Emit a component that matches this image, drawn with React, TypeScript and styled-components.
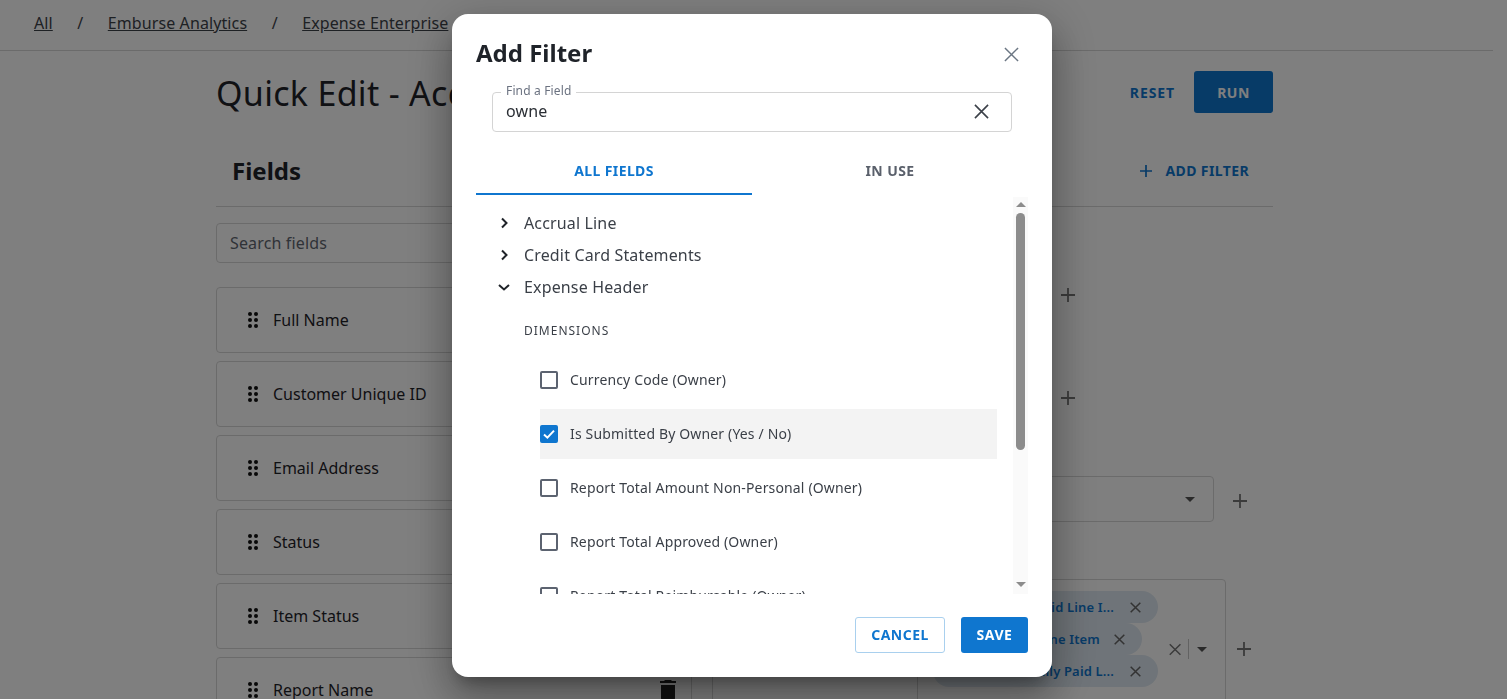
import React from 'react';
import styled, { createGlobalStyle } from 'styled-components';

const fieldNames = ['Full Name', 'Customer Unique ID', 'Email Address', 'Status', 'Item Status', 'Report Name'];
const checkItems = [
  { label: 'Currency Code (Owner)' },
  { label: 'Is Submitted By Owner (Yes / No)', checked: true },
  { label: 'Report Total Amount Non-Personal (Owner)' },
  { label: 'Report Total Approved (Owner)' },
  { label: 'Report Total Reimbursable (Owner)' },
];

const CloseIcon = ({ size = 16, color = '#3b4048', weight = 1.6 }: { size?: number; color?: string; weight?: number }) => (
  <svg width={size} height={size} viewBox="0 0 16 16" fill="none" stroke={color} strokeWidth={weight}>
    <path d="M1 1l14 14M15 1L1 15" />
  </svg>
);

const PlusIcon = ({ size = 14, color = '#777', weight = 1.8 }: { size?: number; color?: string; weight?: number }) => (
  <svg width={size} height={size} viewBox="0 0 14 14" fill="none" stroke={color} strokeWidth={weight}>
    <path d="M7 0v14M0 7h14" />
  </svg>
);

const DragIcon = () => (
  <svg width="10" height="16" viewBox="0 0 10 16" fill="#111">
    {[2, 8, 14].map((y) => (
      <React.Fragment key={y}>
        <circle cx="2" cy={y} r="2" />
        <circle cx="8" cy={y} r="2" />
      </React.Fragment>
    ))}
  </svg>
);

const TrashIcon = () => (
  <svg width="16" height="20" viewBox="0 0 16 20" fill="#222">
    <path d="M5 0h6l1 1h4v2H0V1h4zM1 5h14v13a2 2 0 0 1-2 2H3a2 2 0 0 1-2-2z" />
  </svg>
);

const Chevron = ({ open }: { open?: boolean }) => (
  <svg width="16" height="16" viewBox="0 0 16 16" fill="none" stroke="#1f2329" strokeWidth="2">
    <path d={open ? 'M3 6l5 4.5L13 6' : 'M6 3.5L10.5 8 6 12.5'} />
  </svg>
);

const App: React.FC = () => {
  return (
    <>
      <GlobalStyle />
      <Page>
        <Breadcrumbs>
          <Crumb>All</Crumb>
          <Slash>/</Slash>
          <Crumb>Emburse Analytics</Crumb>
          <Slash>/</Slash>
          <Crumb>Expense Enterprise</Crumb>
        </Breadcrumbs>
        <Main>
          <TitleRow>
            <Title>Quick Edit - Accruals</Title>
            <TitleActions>
              <ResetLink>RESET</ResetLink>
              <RunButton>RUN</RunButton>
            </TitleActions>
          </TitleRow>
          <PanelHeader>
            <PanelTitle>Fields</PanelTitle>
            <AddFilterLink>
              <PlusIcon size={12} color="#0f76cf" weight={2} />
              ADD FILTER
            </AddFilterLink>
          </PanelHeader>
          <PanelBody>
            <FieldsColumn>
              <SearchFields>Search fields</SearchFields>
              <FieldCards>
                {fieldNames.map((name) => (
                  <FieldCard key={name}>
                    <DragIcon />
                    <FieldName>{name}</FieldName>
                    <TrashIcon />
                  </FieldCard>
                ))}
              </FieldCards>
            </FieldsColumn>
            <FiltersColumn>
              <FilterRow $top={65} $gap={19}>
                <FilterBox $width={330} $height={46} />
                <PlusIcon />
              </FilterRow>
              <FilterRow $top={57} $gap={19}>
                <FilterBox $width={330} $height={46} />
                <PlusIcon />
              </FilterRow>
              <FilterRow $top={55} $gap={19} $plusDrop={4}>
                <FilterBox $width={502} $height={46}>
                  <Caret />
                </FilterBox>
                <PlusIcon />
              </FilterRow>
              <FilterRow $top={57} $gap={11}>
                <FilterBox $width={206} $height={140} />
                <ChipBox>
                  <Chips>
                    <Chip>
                      Unpaid Line I...
                      <CloseIcon size={11} color="#666" weight={2.2} />
                    </Chip>
                    <Chip $narrow>
                      Line Item
                      <CloseIcon size={11} color="#666" weight={2.2} />
                    </Chip>
                    <Chip>
                      Partially Paid L...
                      <CloseIcon size={11} color="#666" weight={2.2} />
                    </Chip>
                  </Chips>
                  <CloseIcon size={15} color="#777" weight={2} />
                  <ChipDivider />
                  <Caret />
                </ChipBox>
                <PlusIcon />
              </FilterRow>
            </FiltersColumn>
          </PanelBody>
        </Main>
      </Page>

      <Overlay>
        <Modal>
          <ModalHeader>
            <ModalTitle>Add Filter</ModalTitle>
            <CloseIcon size={15} color="#6b7683" weight={1.6} />
          </ModalHeader>
          <FindField>
            <FindLabel>Find a Field</FindLabel>
            <FindValue>owne</FindValue>
            <CloseIcon size={15} color="#3b4048" weight={1.7} />
          </FindField>
          <Tabs>
            <Tab $active>ALL FIELDS</Tab>
            <Tab>IN USE</Tab>
          </Tabs>
          <ListArea>
            <ListContent>
              <TreeRow>
                <Chevron />
                Accrual Line
              </TreeRow>
              <TreeRow>
                <Chevron />
                Credit Card Statements
              </TreeRow>
              <TreeRow>
                <Chevron open />
                Expense Header
              </TreeRow>
              <GroupLabel>DIMENSIONS</GroupLabel>
              <CheckList>
                {checkItems.map((item) => (
                  <CheckRow key={item.label} $selected={item.checked}>
                    <CheckBox $checked={item.checked}>
                      {item.checked && (
                        <svg width="14" height="14" viewBox="0 0 14 14" fill="none" stroke="#fff" strokeWidth="2">
                          <path d="M2 7.5l3.4 3.2L12 3.6" />
                        </svg>
                      )}
                    </CheckBox>
                    <CheckLabel>{item.label}</CheckLabel>
                  </CheckRow>
                ))}
              </CheckList>
            </ListContent>
            <ScrollTrack>
              <ArrowUp />
              <ScrollThumb />
              <ArrowDown />
            </ScrollTrack>
          </ListArea>
          <ModalFooter>
            <CancelButton>CANCEL</CancelButton>
            <SaveButton>SAVE</SaveButton>
          </ModalFooter>
        </Modal>
      </Overlay>
    </>
  );
};

const GlobalStyle = createGlobalStyle`
  html, body {
    margin: 0;
    height: 100%;
    overflow: hidden;
    background: #fff;
  }
  body {
    font-family: "Noto Sans", "Open Sans", sans-serif;
    color: #1f2329;
    letter-spacing: 0.15px;
  }
  * {
    box-sizing: border-box;
  }
`;

const Page = styled.div`
  width: 1493px;
  height: 699px;
  overflow: hidden;
`;

const Breadcrumbs = styled.div`
  display: flex;
  align-items: center;
  height: 51px;
  padding: 0 0 4px 34px;
  border-bottom: 1px solid #d6d6d6;
  font-size: 16px;
  letter-spacing: 0.1px;
`;

const Crumb = styled.a`
  color: #3d4249;
  text-decoration: underline;
`;

const Slash = styled.span`
  width: 55px;
  text-align: center;
  color: #3d4249;
`;

const Main = styled.div`
  width: 1057px;
  margin-left: 216px;
`;

const TitleRow = styled.div`
  display: flex;
  justify-content: space-between;
  align-items: center;
  height: 42px;
  margin-top: 20px;
`;

const Title = styled.h1`
  margin: 2px 0 0;
  font-size: 34px;
  font-weight: 400;
  letter-spacing: 0.3px;
  white-space: nowrap;
`;

const TitleActions = styled.div`
  display: flex;
  align-items: center;
  gap: 19px;
`;

const ResetLink = styled.span`
  color: #0f76cf;
  font-size: 14px;
  font-weight: 700;
  letter-spacing: 0.9px;
`;

const RunButton = styled.button`
  width: 79px;
  height: 42px;
  border: none;
  border-radius: 3px;
  background: #0f76cf;
  color: #fff;
  font-family: inherit;
  font-size: 14px;
  font-weight: 700;
  letter-spacing: 0.5px;
`;

const PanelHeader = styled.div`
  display: flex;
  justify-content: space-between;
  align-items: center;
  height: 94px;
  padding: 23px 24px 1px 16px;
  border-bottom: 1px solid #d6d6d6;
`;

const PanelTitle = styled.h2`
  margin: 0;
  font-size: 24px;
  font-weight: 700;
  letter-spacing: 0;
`;

const AddFilterLink = styled.span`
  display: flex;
  align-items: center;
  gap: 13px;
  color: #0f76cf;
  font-size: 14px;
  font-weight: 700;
  letter-spacing: 0.4px;
`;

const PanelBody = styled.div`
  display: flex;
  gap: 20px;
`;

const FieldsColumn = styled.div`
  width: 476px;
  flex-shrink: 0;
  padding-top: 16px;
`;

const SearchFields = styled.div`
  display: flex;
  align-items: center;
  height: 40px;
  padding-left: 13px;
  border: 1px solid #d6d6d6;
  border-radius: 4px;
  color: #5f6670;
  font-size: 16px;
`;

const FieldCards = styled.div`
  display: flex;
  flex-direction: column;
  gap: 8px;
  margin-top: 24px;
`;

const FieldCard = styled.div`
  display: flex;
  align-items: center;
  flex-shrink: 0;
  gap: 14px;
  height: 66px;
  padding: 0 15px 0 31px;
  border: 1px solid #d6d6d6;
  border-radius: 4px;
  font-size: 16px;
  letter-spacing: 0;
`;

const FieldName = styled.span`
  flex: 1;
  margin-left: 1px;
`;

const FiltersColumn = styled.div`
  display: flex;
  flex-direction: column;
`;

const FilterRow = styled.div<{ $top: number; $gap: number; $plusDrop?: number }>`
  display: flex;
  align-items: center;
  margin-top: ${(p) => p.$top}px;
  & > svg:last-child {
    margin-left: ${(p) => p.$gap}px;
    margin-top: ${(p) => p.$plusDrop ?? 0}px;
  }
`;

const FilterBox = styled.div<{ $width: number; $height: number }>`
  display: flex;
  align-items: center;
  justify-content: flex-end;
  flex-shrink: 0;
  width: ${(p) => p.$width}px;
  height: ${(p) => p.$height}px;
  padding-right: 18px;
  border: 1px solid #d6d6d6;
  border-radius: 4px;
`;

const Caret = styled.span`
  width: 0;
  height: 0;
  border-left: 5px solid transparent;
  border-right: 5px solid transparent;
  border-top: 5px solid #555;
`;

const ChipBox = styled.div`
  display: flex;
  align-items: center;
  flex-shrink: 0;
  width: 309px;
  height: 140px;
  margin-left: -1px;
  padding: 0 18px 0 15px;
  border: 1px solid #d6d6d6;
  border-radius: 0 4px 4px 0;
`;

const Chips = styled.div`
  display: flex;
  flex-direction: column;
  align-items: flex-start;
  align-self: flex-start;
  flex-shrink: 0;
  width: 236px;
  margin-top: 11px;
`;

const Chip = styled.span<{ $narrow?: boolean }>`
  display: flex;
  align-items: center;
  justify-content: flex-end;
  gap: ${(p) => (p.$narrow ? 14 : 16)}px;
  width: ${(p) => (p.$narrow ? 209 : 225)}px;
  height: 32px;
  padding-right: 17px;
  border-radius: 16px;
  background: #dfe9f2;
  color: #0f76cf;
  font-size: 13px;
  font-weight: 600;
  white-space: nowrap;
`;

const ChipDivider = styled.span`
  width: 1px;
  height: 20px;
  margin: 0 8px 0 7px;
  background: #c4c4c4;
`;

const Overlay = styled.div`
  position: fixed;
  inset: 0;
  padding: 14px 0 0 452px;
  background: rgba(0, 0, 0, 0.5);
`;

const Modal = styled.div`
  display: flex;
  flex-direction: column;
  width: 600px;
  height: 663px;
  padding: 21px 24px 24px;
  border-radius: 16px;
  background: #fff;
  box-shadow: 0 11px 15px -7px rgba(0, 0, 0, 0.3), 0 24px 38px 3px rgba(0, 0, 0, 0.2), 0 9px 46px 8px rgba(0, 0, 0, 0.16);
`;

const ModalHeader = styled.div`
  display: flex;
  justify-content: space-between;
  align-items: center;
  height: 34px;
  padding-right: 9px;
  & > svg {
    margin-top: 5px;
  }
`;

const ModalTitle = styled.h2`
  margin: 0;
  font-size: 24px;
  font-weight: 700;
  letter-spacing: 0;
  color: #1f2329;
`;

const FindField = styled.div`
  position: relative;
  display: flex;
  align-items: center;
  justify-content: space-between;
  flex-shrink: 0;
  height: 40px;
  margin: 23px 16px 0;
  padding: 0 22px 2px 13px;
  border: 1px solid #d4d4d4;
  border-radius: 4px;
`;

const FindLabel = styled.span`
  position: absolute;
  top: -10px;
  left: 8px;
  padding: 0 5px;
  background: #fff;
  color: #6b7280;
  font-size: 12px;
  line-height: 16px;
`;

const FindValue = styled.span`
  font-size: 16px;
  color: #2a2e34;
`;

const Tabs = styled.div`
  display: flex;
  flex-shrink: 0;
  margin-top: 16px;
`;

const Tab = styled.div<{ $active?: boolean }>`
  flex: 1;
  height: 47px;
  padding-top: 13px;
  border-bottom: 2px solid ${(p) => (p.$active ? '#0f76cf' : 'transparent')};
  color: ${(p) => (p.$active ? '#0f76cf' : '#5a606b')};
  font-size: 14px;
  font-weight: 700;
  letter-spacing: 0.4px;
  line-height: 20px;
  text-align: center;
`;

const ListArea = styled.div`
  display: flex;
  justify-content: space-between;
  height: 397px;
  margin-top: 2px;
`;

const ListContent = styled.div`
  width: 521px;
  height: 100%;
  padding-top: 10px;
  overflow: hidden;
`;

const TreeRow = styled.div`
  display: flex;
  align-items: center;
  gap: 12px;
  height: 32px;
  padding-left: 20px;
  color: #3a3f47;
  font-size: 16px;
`;

const GroupLabel = styled.div`
  margin: 19px 0 15px 48px;
  color: #3a3f47;
  font-size: 12px;
  letter-spacing: 1px;
  line-height: 18px;
`;

const CheckList = styled.div`
  display: flex;
  flex-direction: column;
  gap: 4px;
  margin-left: 64px;
`;

const CheckRow = styled.div<{ $selected?: boolean }>`
  display: flex;
  align-items: center;
  flex-shrink: 0;
  gap: 12px;
  height: 50px;
  background: ${(p) => (p.$selected ? '#f3f3f3' : 'transparent')};
  color: #3a3f47;
  font-size: 14px;
`;

const CheckLabel = styled.span`
  margin-bottom: 2px;
`;

const CheckBox = styled.span<{ $checked?: boolean }>`
  display: flex;
  align-items: center;
  justify-content: center;
  width: 18px;
  height: 18px;
  border: 2px solid ${(p) => (p.$checked ? '#0f76cf' : '#5c6370')};
  border-radius: 2px;
  background: ${(p) => (p.$checked ? '#0f76cf' : '#fff')};
`;

const ScrollTrack = styled.div`
  display: flex;
  flex-direction: column;
  align-items: center;
  width: 15px;
  height: 100%;
  padding-top: 5px;
  background: #fafafa;
`;

const ArrowUp = styled.span`
  border-left: 5px solid transparent;
  border-right: 5px solid transparent;
  border-bottom: 5px solid #8c8c8c;
`;

const ScrollThumb = styled.span`
  width: 9px;
  height: 237px;
  margin-top: 6px;
  border-radius: 5px;
  background: #8c8c8c;
`;

const ArrowDown = styled.span`
  margin-top: 132px;
  border-left: 5px solid transparent;
  border-right: 5px solid transparent;
  border-top: 5px solid #8c8c8c;
`;

const ModalFooter = styled.div`
  display: flex;
  justify-content: flex-end;
  gap: 16px;
  margin-top: 23px;
`;

const CancelButton = styled.button`
  width: 90px;
  height: 36px;
  padding-bottom: 2px;
  border: 1px solid #a9d0ee;
  border-radius: 3px;
  background: #fff;
  color: #0f76cf;
  font-family: inherit;
  font-size: 14px;
  font-weight: 700;
  letter-spacing: 0.5px;
`;

const SaveButton = styled.button`
  width: 67px;
  height: 36px;
  padding-bottom: 2px;
  border: none;
  border-radius: 3px;
  background: #0f76cf;
  color: #fff;
  font-family: inherit;
  font-size: 14px;
  font-weight: 700;
  letter-spacing: 0.5px;
`;

export default App;
